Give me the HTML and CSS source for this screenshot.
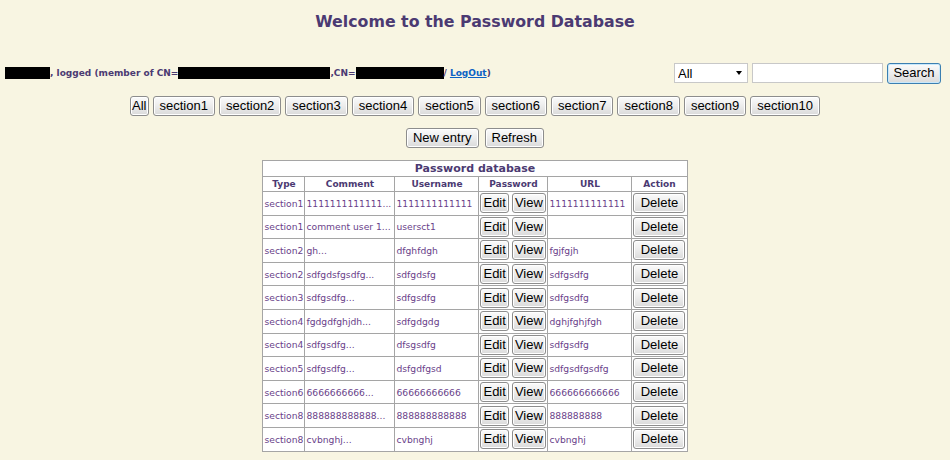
FILE: index.html
```html
<!DOCTYPE html>
<html>
<head>
<meta charset="utf-8">
<title>Password Database</title>
<link rel="stylesheet" href="styles.css">
</head>
<body>
<h1 class="title">Welcome to the Password Database</h1>
<div class="userbar">
  <div class="userinfo">
    <span class="redact r1"></span>, logged (member of CN=<span class="redact r2"></span>,CN=<span class="redact r3"></span>/ <a href="#" class="logout">LogOut</a>)
  </div>
  <form class="search">
    <span class="select-wrap"><select class="select"><option>All</option></select></span>
    <input class="text" type="text">
    <button class="btn btn-default" type="button">Search</button>
  </form>
</div>
<div class="sections">
  <button class="btn btn-all">All</button>
  <button class="btn">section1</button>
  <button class="btn">section2</button>
  <button class="btn">section3</button>
  <button class="btn">section4</button>
  <button class="btn">section5</button>
  <button class="btn">section6</button>
  <button class="btn">section7</button>
  <button class="btn">section8</button>
  <button class="btn">section9</button>
  <button class="btn">section10</button>
</div>
<div class="actions">
  <button class="btn">New entry</button>
  <button class="btn">Refresh</button>
</div>
<table class="db">
  <colgroup>
    <col class="c-type"><col class="c-comment"><col class="c-user"><col class="c-pass"><col class="c-url"><col class="c-action">
  </colgroup>
  <tr class="cap"><th colspan="6">Password database</th></tr>
  <tr class="head"><th>Type</th><th>Comment</th><th>Username</th><th>Password</th><th>URL</th><th>Action</th></tr>
  <tr><td>section1</td><td>1111111111111...</td><td>1111111111111</td><td class="pw"><button class="btn btn-sm">Edit</button><button class="btn btn-sm">View</button></td><td>1111111111111</td><td class="act"><button class="btn btn-sm">Delete</button></td></tr>
  <tr><td>section1</td><td>comment user 1...</td><td>usersct1</td><td class="pw"><button class="btn btn-sm">Edit</button><button class="btn btn-sm">View</button></td><td></td><td class="act"><button class="btn btn-sm">Delete</button></td></tr>
  <tr><td>section2</td><td>gh...</td><td>dfghfdgh</td><td class="pw"><button class="btn btn-sm">Edit</button><button class="btn btn-sm">View</button></td><td>fgjfgjh</td><td class="act"><button class="btn btn-sm">Delete</button></td></tr>
  <tr><td>section2</td><td>sdfgdsfgsdfg...</td><td>sdfgdsfg</td><td class="pw"><button class="btn btn-sm">Edit</button><button class="btn btn-sm">View</button></td><td>sdfgsdfg</td><td class="act"><button class="btn btn-sm">Delete</button></td></tr>
  <tr><td>section3</td><td>sdfgsdfg...</td><td>sdfgsdfg</td><td class="pw"><button class="btn btn-sm">Edit</button><button class="btn btn-sm">View</button></td><td>sdfgsdfg</td><td class="act"><button class="btn btn-sm">Delete</button></td></tr>
  <tr><td>section4</td><td>fgdgdfghjdh...</td><td>sdfgdgdg</td><td class="pw"><button class="btn btn-sm">Edit</button><button class="btn btn-sm">View</button></td><td>dghjfghjfgh</td><td class="act"><button class="btn btn-sm">Delete</button></td></tr>
  <tr><td>section4</td><td>sdfgsdfg...</td><td>dfsgsdfg</td><td class="pw"><button class="btn btn-sm">Edit</button><button class="btn btn-sm">View</button></td><td>sdfgsdfg</td><td class="act"><button class="btn btn-sm">Delete</button></td></tr>
  <tr><td>section5</td><td>sdfgsdfg...</td><td>dsfgdfgsd</td><td class="pw"><button class="btn btn-sm">Edit</button><button class="btn btn-sm">View</button></td><td>sdfgsdfgsdfg</td><td class="act"><button class="btn btn-sm">Delete</button></td></tr>
  <tr><td>section6</td><td>6666666666...</td><td>66666666666</td><td class="pw"><button class="btn btn-sm">Edit</button><button class="btn btn-sm">View</button></td><td>666666666666</td><td class="act"><button class="btn btn-sm">Delete</button></td></tr>
  <tr><td>section8</td><td>888888888888...</td><td>888888888888</td><td class="pw"><button class="btn btn-sm">Edit</button><button class="btn btn-sm">View</button></td><td>888888888</td><td class="act"><button class="btn btn-sm">Delete</button></td></tr>
  <tr><td>section8</td><td>cvbnghj...</td><td>cvbnghj</td><td class="pw"><button class="btn btn-sm">Edit</button><button class="btn btn-sm">View</button></td><td>cvbnghj</td><td class="act"><button class="btn btn-sm">Delete</button></td></tr>
</table>
</body>
</html>
```
FILE: styles.css
```css
html, body {
  margin: 0;
  padding: 0;
}
body {
  background: #f8f5e2;
  font-family: "DejaVu Sans", Verdana, sans-serif;
  color: #4b3a72;
}
.title {
  margin: 0;
  padding-top: 11px;
  text-align: center;
  font-size: 15.8px;
  line-height: 22px;
  font-weight: bold;
  color: #4b3a72;
}
.userbar {
  display: flex;
  justify-content: space-between;
  align-items: center;
  margin-top: 29px;
  padding: 0 9px 0 5px;
  height: 22px;
}
.userinfo {
  font-size: 9px;
  font-weight: bold;
  color: #4b3a72;
  white-space: nowrap;
}
.redact {
  display: inline-block;
  background: #000;
  height: 12px;
  vertical-align: -3px;
}
.r1 { width: 45px; }
.r2 { width: 152px; }
.r3 { width: 88px; }
.logout {
  color: #0b62c4;
  text-decoration: underline;
}
.search {
  display: flex;
  align-items: center;
  gap: 4px;
  margin: 0;
}
.select-wrap {
  position: relative;
  display: inline-block;
}
.select-wrap::after {
  content: "";
  position: absolute;
  right: 6px;
  top: 8px;
  border-left: 3.5px solid transparent;
  border-right: 3.5px solid transparent;
  border-top: 4px solid #000;
  pointer-events: none;
}
.select {
  appearance: none;
  -webkit-appearance: none;
  width: 74px;
  height: 20px;
  padding: 0 0 0 3px;
  border: 1px solid #c8c8c8;
  background: #fff;
  font-family: "Liberation Sans", Arial, sans-serif;
  font-size: 13px;
  color: #000;
  border-radius: 0;
  display: block;
}
.text {
  width: 131px;
  height: 20px;
  box-sizing: border-box;
  border: 1px solid #c8c8c8;
  background: #fff;
  padding: 0 2px;
  margin: 0;
}
.btn {
  font-family: "Liberation Sans", Arial, sans-serif;
  font-size: 13px;
  color: #000;
  height: 20px;
  line-height: 16px;
  padding: 0 6px;
  margin: 0;
  border: 1px solid #8d8d8d;
  border-radius: 3px;
  background: linear-gradient(#fbfbfb, #ececec 50%, #dadada);
  box-shadow: inset 0 0 0 1px #ffffff;
  cursor: default;
}
.btn-default {
  border-color: #3c7fb1;
  box-shadow: inset 0 0 0 1px #c8e8fb;
  width: 54px;
  padding: 0;
  height: 21px;
}
.sections {
  display: flex;
  justify-content: center;
  gap: 4px;
  margin-top: 12px;
}
.btn-all {
  padding: 0 1px;
}
.actions {
  display: flex;
  justify-content: center;
  gap: 6px;
  margin-top: 12px;
}
.db {
  margin: 12px auto 0;
  border-collapse: collapse;
  background: #fff;
  border: 1px solid #9a9a9a;
  width: 424px;
  table-layout: fixed;
}
.c-type { width: 42px; }
.c-comment { width: 90px; }
.c-user { width: 84px; }
.c-pass { width: 69px; }
.c-url { width: 84px; }
.c-action { width: 55px; }
.db th, .db td {
  border: 1px solid #a5a5a5;
  padding: 0 1px;
  white-space: nowrap;
  overflow: hidden;
}
.cap th {
  font-size: 11px;
  height: 15px;
  line-height: 14px;
  color: #4b3a72;
}
.head th {
  font-size: 9px;
  height: 14px;
  line-height: 12px;
  color: #4b3a72;
}
.db td {
  font-size: 9.2px;
  color: #6a3f8a;
  height: 22.6px;
  text-align: left;
}
.db td.pw {
  padding: 0 1px;
}
.db td.pw .btn + .btn {
  margin-left: 3px;
}
.db td.act {
  text-align: center;
}
.btn-sm {
  padding: 0 2px;
  height: 20px;
  vertical-align: middle;
}
.act .btn-sm {
  width: 52px;
}
```
